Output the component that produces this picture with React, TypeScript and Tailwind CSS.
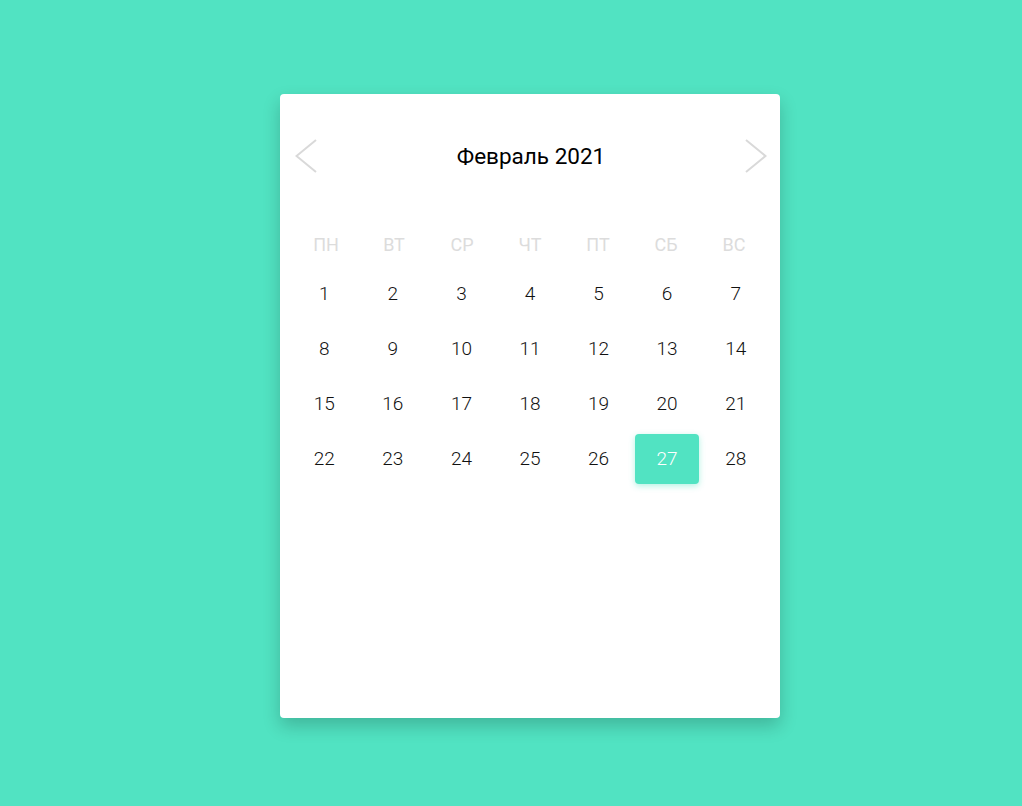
const weekdays = ["ПН", "ВТ", "СР", "ЧТ", "ПТ", "СБ", "ВС"];

const days = Array.from({ length: 28 }, (_, i) => i + 1);

const Chevron = ({ dir }: { dir: "left" | "right" }) => (
  <svg width="22" height="34" viewBox="0 0 22 34" fill="none">
    <polyline
      points={dir === "left" ? "21,1 1.5,17 21,33" : "1,1 20.5,17 1,33"}
      stroke="#d9d9d9"
      strokeWidth="2"
    />
  </svg>
);

export default function App() {
  const today = 27;

  return (
    <div className="min-h-screen w-full bg-[#51e3c2] pt-[94px] pl-[280px] font-['Roboto',sans-serif]">
      <div className="w-[500px] h-[624px] bg-white rounded-[4px] shadow-[0_8px_18px_rgba(0,0,0,0.2)] px-[10px]">
        <div className="h-[124px] flex items-center justify-between pl-[5px] pr-[3px]">
          <Chevron dir="left" />
          <div className="text-[22.5px] font-[450] text-black pt-[2px]">Февраль 2021</div>
          <Chevron dir="right" />
        </div>
        <div className="mt-[6px] ml-[2px] grid grid-cols-[repeat(7,68px)]">
          {weekdays.map((d) => (
            <div
              key={d}
              className="h-[40px] flex items-center justify-center text-[18px] text-[#dcdcdc]"
            >
              {d}
            </div>
          ))}
        </div>
        <div className="mt-[5px] grid grid-cols-7 gap-y-[5px]">
          {days.map((d) => (
            <div key={d} className="flex justify-center">
              <div
                className={
                  d === today
                    ? "w-[64px] h-[50px] flex items-center justify-center rounded-[4px] bg-[#51e3c2] text-white text-[19px] font-light shadow-[0_2px_6px_rgba(81,227,194,0.45)]"
                    : "w-[64px] h-[50px] flex items-center justify-center text-[19px] font-light text-[#111]"
                }
              >
                {d}
              </div>
            </div>
          ))}
        </div>
      </div>
    </div>
  );
}
